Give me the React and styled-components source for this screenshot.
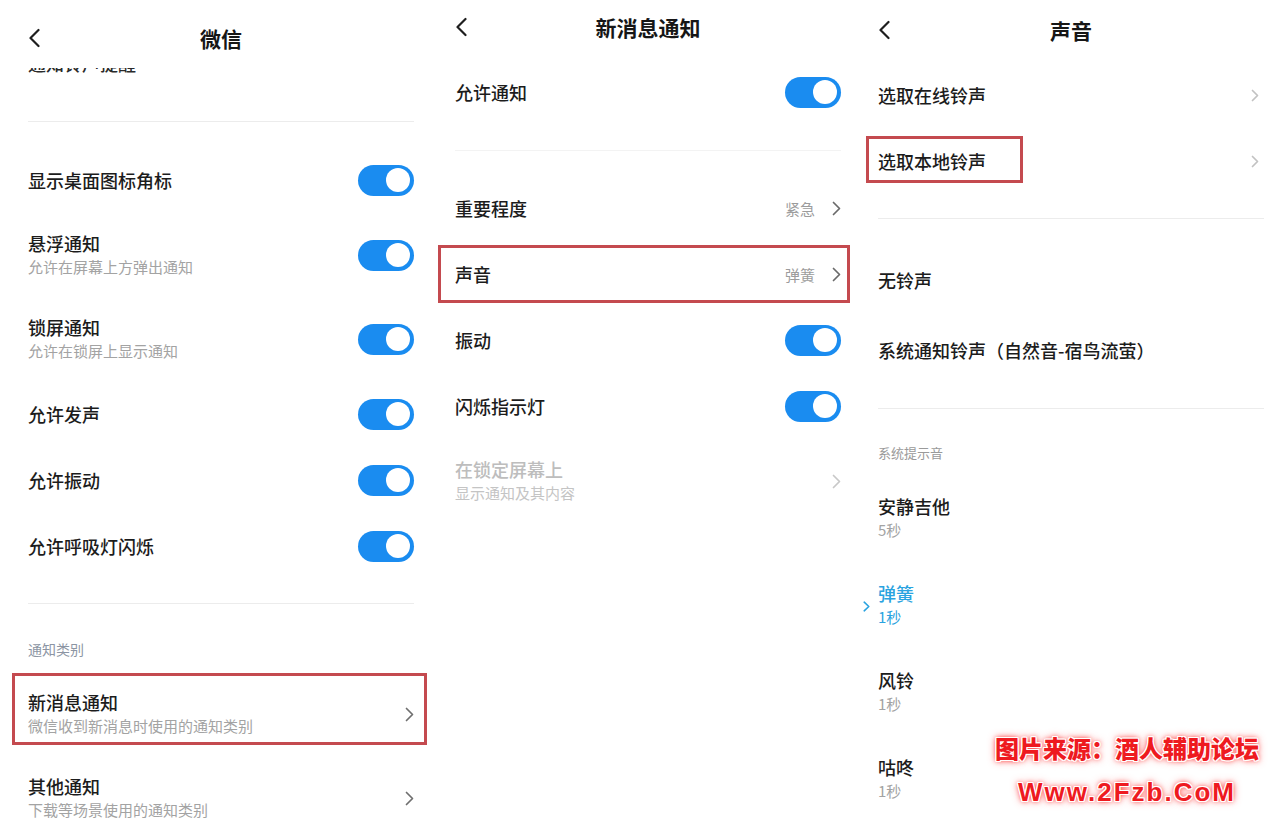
import styled, { createGlobalStyle } from "styled-components";

const GlobalStyle = createGlobalStyle`
  html, body {
    margin: 0;
    padding: 0;
    background: #fff;
  }
  body {
    font-family: "Noto Sans CJK SC", "Noto Sans", sans-serif;
    color: #1c1c1c;
    -webkit-font-smoothing: antialiased;
  }
`;

function BackIcon() {
  return (
    <svg width="12" height="20" viewBox="0 0 12 20">
      <path
        d="M10.5 2 L2.5 10 L10.5 18"
        stroke="#1e1e1e"
        strokeWidth="2.2"
        fill="none"
        strokeLinecap="round"
        strokeLinejoin="round"
      />
    </svg>
  );
}

function ChevronRight({ color = "#777", small }) {
  const w = small ? 8 : 9;
  const h = small ? 13 : 15;
  return (
    <svg width={w} height={h} viewBox={`0 0 ${w} ${h}`}>
      <path
        d={`M1.5 1.5 L${w - 1.5} ${h / 2} L1.5 ${h - 1.5}`}
        stroke={color}
        strokeWidth="1.7"
        fill="none"
        strokeLinecap="round"
        strokeLinejoin="round"
      />
    </svg>
  );
}

function Switch() {
  return (
    <Track>
      <Knob />
    </Track>
  );
}

function SettingRow({ h, title, sub, value, toggle, chevron, chevronColor, chevronGap = 0, smallChevron, muted, active, marker, highlight }) {
  return (
    <Row $h={h}>
      {marker && (
        <Marker>
          <svg width="7" height="11" viewBox="0 0 7 11">
            <path d="M1.2 1.2 L5.8 5.5 L1.2 9.8" stroke="#2aa3e0" strokeWidth="1.6" fill="none" strokeLinecap="round" strokeLinejoin="round" />
          </svg>
        </Marker>
      )}
      <RowText>
        <Title $muted={muted} $active={active}>{title}</Title>
        {sub && <Sub $muted={muted} $active={active}>{sub}</Sub>}
      </RowText>
      {value && <Value>{value}</Value>}
      {toggle && <Switch />}
      {chevron && (
        <ChevronBox $gap={chevronGap}>
          <ChevronRight color={chevronColor} small={smallChevron} />
        </ChevronBox>
      )}
      {highlight && <Annotation {...highlight} />}
    </Row>
  );
}

export default function App() {
  return (
    <>
      <GlobalStyle />
      <Page>
        <Panel $pl={28} $pr={16}>
          <Header $h={68} $pt={8}>
            <BackIcon />
            <HeaderTitle>微信</HeaderTitle>
            <span />
          </Header>
          <ClipLine>
            <ClipText>通知铃声提醒</ClipText>
          </ClipLine>
          <Divider $mt={47} $mb={25} />
          <SettingRow h={66} title="显示桌面图标角标" toggle />
          <SettingRow h={84} title="悬浮通知" sub="允许在屏幕上方弹出通知" toggle />
          <SettingRow h={84} title="锁屏通知" sub="允许在锁屏上显示通知" toggle />
          <SettingRow h={66} title="允许发声" toggle />
          <SettingRow h={66} title="允许振动" toggle />
          <SettingRow h={66} title="允许呼吸灯闪烁" toggle />
          <Divider $mt={24} $mb={0} />
          <SectionLabel $pt={35} $pb={13} $color="#8c95a3" $size={14}>通知类别</SectionLabel>
          <SettingRow
            h={84}
            title="新消息通知"
            sub="微信收到新消息时使用的通知类别"
            chevron
            chevronColor="#6f6f6f"
            highlight={{ $top: 1, $bottom: 11, $left: -16, $right: -13 }}
          />
          <SettingRow h={84} title="其他通知" sub="下载等场景使用的通知类别" chevron chevronColor="#6f6f6f" />
        </Panel>

        <Panel $pl={25} $pr={14}>
          <Header $h={59} $pt={0} $pb={5}>
            <BackIcon />
            <HeaderTitle>新消息通知</HeaderTitle>
            <span />
          </Header>
          <SettingRow h={66} title="允许通知" toggle />
          <Divider $mt={25} $mb={24} $light />
          <SettingRow h={66} title="重要程度" value="紧急" chevron chevronColor="#6a6a6a" />
          <SettingRow
            h={66}
            title="声音"
            value="弹簧"
            chevron
            chevronColor="#6a6a6a"
            highlight={{ $top: 4, $bottom: 4, $left: -17, $right: -9 }}
          />
          <SettingRow h={66} title="振动" toggle />
          <SettingRow h={66} title="闪烁指示灯" toggle />
          <SettingRow h={84} title="在锁定屏幕上" sub="显示通知及其内容" muted chevron chevronColor="#c8c8c8" />
        </Panel>

        <Panel $pl={23} $pr={19}>
          <Header $h={62} $pt={0} $pb={2}>
            <BackIcon />
            <HeaderTitle>声音</HeaderTitle>
            <span />
          </Header>
          <SettingRow h={66} title="选取在线铃声" chevron chevronGap={5} chevronColor="#c2c2c2" smallChevron />
          <SettingRow
            h={66}
            title="选取本地铃声"
            chevron
            chevronGap={5}
            chevronColor="#c2c2c2"
            smallChevron
            highlight={{ $top: 8, $bottom: 11, $left: -12, $width: 157 }}
          />
          <Divider $mt={24} $mb={26} />
          <SettingRow h={70} title="无铃声" />
          <SettingRow h={70} title="系统通知铃声（自然音-宿鸟流萤）" />
          <Divider $mt={23} $mb={0} />
          <SectionLabel $pt={34} $pb={11} $color="#9a9a9a" $size={13}>系统提示音</SectionLabel>
          <SettingRow h={87} title="安静吉他" sub="5秒" />
          <SettingRow h={87} title="弹簧" sub="1秒" active marker />
          <SettingRow h={87} title="风铃" sub="1秒" />
          <SettingRow h={87} title="咕咚" sub="1秒" />
        </Panel>

        <Watermark>
          <WatermarkLine $size={24}>图片来源：酒人辅助论坛</WatermarkLine>
          <WatermarkLine $size={26} $spacing={2} $latin>Www.2Fzb.CoM</WatermarkLine>
        </Watermark>
      </Page>
    </>
  );
}

const Page = styled.div`
  position: relative;
  display: grid;
  grid-template-columns: 430px 425px 428px;
  width: 1283px;
  height: 833px;
  overflow: hidden;
  background: #fff;
`;

const Panel = styled.div`
  display: flex;
  flex-direction: column;
  padding: 0 ${(p) => p.$pr}px 0 ${(p) => p.$pl}px;
  height: 833px;
  overflow: hidden;
`;

const Header = styled.div`
  display: grid;
  grid-template-columns: 40px 1fr 40px;
  align-items: center;
  height: ${(p) => p.$h}px;
  padding: ${(p) => p.$pt || 0}px 0 ${(p) => p.$pb || 0}px;
  box-sizing: border-box;
  flex-shrink: 0;

  svg {
    display: block;
  }
`;

const HeaderTitle = styled.div`
  text-align: center;
  font-size: 21px;
  line-height: 32px;
  font-weight: 700;
  color: #161616;
`;

const ClipLine = styled.div`
  height: 6px;
  overflow: hidden;
  flex-shrink: 0;
  align-self: flex-start;
`;

const ClipText = styled.div`
  margin-top: -17px;
  font-size: 18px;
  line-height: 24px;
  font-weight: 500;
  color: #2a2a2a;
  white-space: nowrap;
`;

const Divider = styled.div`
  height: 1px;
  flex-shrink: 0;
  background: ${(p) => (p.$light ? "#f3f3f3" : "#ececec")};
  margin: ${(p) => p.$mt}px 0 ${(p) => p.$mb}px;
`;

const SectionLabel = styled.div`
  flex-shrink: 0;
  padding: ${(p) => p.$pt}px 0 ${(p) => p.$pb}px;
  font-size: ${(p) => p.$size}px;
  line-height: 20px;
  color: ${(p) => p.$color};
`;

const Row = styled.div`
  position: relative;
  display: flex;
  align-items: center;
  height: ${(p) => p.$h}px;
  flex-shrink: 0;
`;

const RowText = styled.div`
  flex: 1;
  display: flex;
  flex-direction: column;
  min-width: 0;
`;

const Title = styled.div`
  font-size: 18px;
  line-height: 23px;
  font-weight: 500;
  white-space: nowrap;
  color: ${(p) => (p.$muted ? "#bdbdbd" : p.$active ? "#2aa3e0" : "#1c1c1c")};
`;

const Sub = styled.div`
  font-size: 15px;
  line-height: 23px;
  white-space: nowrap;
  color: ${(p) => (p.$muted ? "#c4c4c4" : p.$active ? "#2aa3e0" : "#a3a3a3")};
`;

const Value = styled.div`
  font-size: 15px;
  color: #9c9c9c;
  margin-right: 17px;
`;

const ChevronBox = styled.div`
  display: flex;
  align-items: center;
  margin-right: ${(p) => p.$gap}px;

  svg {
    display: block;
  }
`;

const Marker = styled.div`
  width: 15px;
  margin-left: -15px;
  display: flex;
  align-items: center;
  padding-top: 3px;

  svg {
    display: block;
  }
`;

const Track = styled.span`
  display: flex;
  align-items: center;
  justify-content: flex-end;
  width: 56px;
  height: 31px;
  padding: 0 4px;
  box-sizing: border-box;
  border-radius: 16px;
  background: #1a8cf0;
  flex-shrink: 0;
`;

const Knob = styled.span`
  width: 24px;
  height: 24px;
  border-radius: 50%;
  background: #fff;
`;

const Annotation = styled.div`
  position: absolute;
  top: ${(p) => p.$top}px;
  bottom: ${(p) => p.$bottom}px;
  left: ${(p) => p.$left}px;
  ${(p) => (p.$width ? `width: ${p.$width}px;` : `right: ${p.$right}px;`)}
  border: 3px solid #c44a4f;
  box-sizing: border-box;
  pointer-events: none;
`;

const Watermark = styled.div`
  position: absolute;
  left: 990px;
  top: 733px;
  width: 274px;
  display: flex;
  flex-direction: column;
  align-items: center;
  gap: 14px;
`;

const WatermarkLine = styled.div`
  font-family: ${(p) => (p.$latin ? '"Liberation Sans", "DejaVu Sans", sans-serif' : '"Noto Sans CJK SC", sans-serif')};
  font-size: ${(p) => p.$size}px;
  line-height: 30px;
  font-weight: 900;
  letter-spacing: ${(p) => p.$spacing || 0}px;
  white-space: nowrap;
  color: #ee1a1f;
  text-shadow:
    1px 0 0 #fff,
    -1px 0 0 #fff,
    0 1px 0 #fff,
    0 -1px 0 #fff,
    1px 1px 0 #fff,
    -1px -1px 0 #fff,
    1px -1px 0 #fff,
    -1px 1px 0 #fff,
    0 0 5px #ff2a2a,
    0 0 8px rgba(255, 40, 40, 0.7);
`;
